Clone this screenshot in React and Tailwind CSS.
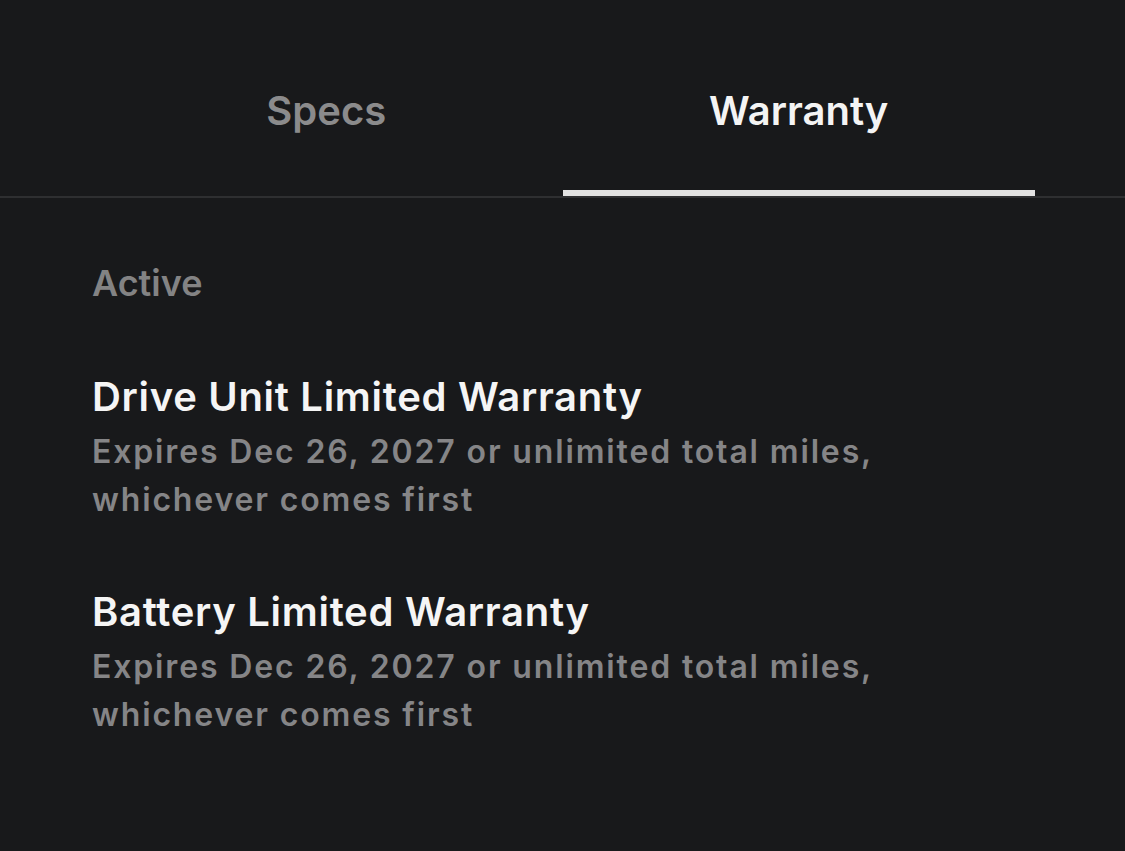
export default function App() {
  const items = [
    { title: "Drive Unit Limited Warranty" },
    { title: "Battery Limited Warranty" },
  ];
  return (
    <div
      className="w-[1125px] h-[851px] bg-[#18191b] overflow-hidden"
      style={{ fontFamily: "Inter, 'Noto Sans', sans-serif" }}
    >
      <div className="flex px-[90px] h-[196px]">
        <div className="flex-1 pt-[87px] text-center text-[40px] leading-[48px] font-semibold text-[#8b8b8c]">
          Specs
        </div>
        <div className="flex-1 pt-[87px] text-center text-[40px] leading-[48px] font-semibold text-[#f4f4f4] border-b-[6px] border-[#e2e2e2]">
          Warranty
        </div>
      </div>
      <div className="h-[2px] bg-[#2e2f31]" />
      <div className="pl-[92px] pt-[63px]">
        <div className="text-[36px] leading-[44px] font-semibold text-[#838384]">Active</div>
        <div className="flex flex-col gap-[64px] mt-[68px]">
          {items.map((it) => (
            <div key={it.title} className="flex flex-col gap-[7px]">
              <div className="text-[40px] leading-[48px] font-semibold tracking-[0.7px] text-[#f5f5f5]">{it.title}</div>
              <div className="text-[32px] leading-[48px] font-semibold tracking-[1.85px] text-[#858587] w-[900px]">
                Expires Dec 26, 2027 or unlimited total miles,
                <br />
                whichever comes first
              </div>
            </div>
          ))}
        </div>
      </div>
    </div>
  );
}
